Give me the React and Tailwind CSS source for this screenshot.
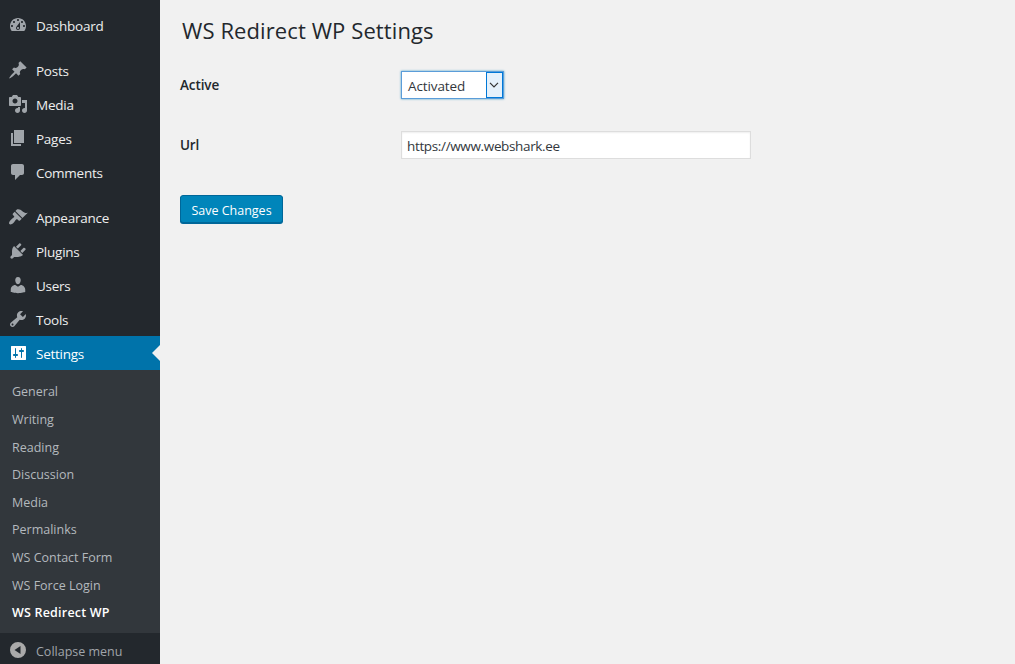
const paths = {
  dashboard:
    'M3.76 16h12.48c1.1-1.37 1.76-3.11 1.76-5 0-4.42-3.58-8-8-8s-8 3.58-8 8c0 1.89.66 3.63 1.76 5zM10 4c.55 0 1 .45 1 1s-.45 1-1 1-1-.45-1-1 .45-1 1-1zM6 6c.55 0 1 .45 1 1s-.45 1-1 1-1-.45-1-1 .45-1 1-1zm8 0c.55 0 1 .45 1 1s-.45 1-1 1-1-.45-1-1 .45-1 1-1zm-5.37 5.55L12 7v6c0 1.1-.9 2-2 2s-2-.9-2-2c0-.57.24-1.08.63-1.45zM4 10c.55 0 1 .45 1 1s-.45 1-1 1-1-.45-1-1 .45-1 1-1zm12 0c.55 0 1 .45 1 1s-.45 1-1 1-1-.45-1-1 .45-1 1-1zm-5 3c0-.55-.45-1-1-1s-1 .45-1 1 .45 1 1 1 1-.45 1-1z',
  posts:
    'M10.44 3.02l1.82-1.82 6.36 6.35-1.83 1.82c-1.05-.68-2.48-.57-3.41.36l-.75.75c-.92.93-1.04 2.35-.35 3.41l-1.83 1.82-2.41-2.41-2.8 2.79c-.42.42-3.38 2.71-3.8 2.29s1.86-3.39 2.28-3.81l2.79-2.79L4.1 9.36l1.83-1.82c1.05.69 2.48.57 3.4-.36l.75-.75c.93-.92 1.05-2.35.36-3.41z',
  media:
    'M13 11V4c0-.55-.45-1-1-1h-1.67L9 1H5L3.67 3H2c-.55 0-1 .45-1 1v7c0 .55.45 1 1 1h10c.55 0 1-.45 1-1zM7 4.5c1.38 0 2.5 1.12 2.5 2.5S8.38 9.5 7 9.5 4.5 8.38 4.5 7 5.62 4.5 7 4.5zM14 6h5v10.5c0 1.38-1.12 2.5-2.5 2.5S14 17.88 14 16.5s1.12-2.5 2.5-2.5c.17 0 .34.02.5.05V9h-3V6zm-4 8.05V13h2v3.5c0 1.38-1.12 2.5-2.5 2.5S7 17.88 7 16.5 8.12 14 9.5 14c.17 0 .34.02.5.05z',
  pages: 'M6 15V2h10v13H6zm-1 1h8v2H3V5h2v11z',
  comments:
    'M5 2h9c1.1 0 2 .9 2 2v7c0 1.1-.9 2-2 2h-2l-5 5v-5H5c-1.1 0-2-.9-2-2V4c0-1.1.9-2 2-2z',
  appearance:
    'M14.48 11.06L7.41 3.99l1.5-1.5c.5-.56 2.3-.47 3.51.32 1.21.8 1.43 1.28 2.91 2.1 1.18.64 2.45 1.26 4.45.85zm-.71.71L6.7 4.7 4.93 6.47c-.39.39-.39 1.02 0 1.41l1.06 1.06c.39.39.39 1.03 0 1.42-.6.6-1.43 1.11-2.21 1.69-.35.26-.7.53-1.01.84C1.43 14.23.4 16.08 1.4 17.07c.99 1 2.84-.03 4.18-1.36.31-.31.58-.66.85-1.02.57-.78 1.08-1.61 1.69-2.21.39-.39 1.02-.39 1.41 0l1.06 1.06c.39.39 1.02.39 1.41 0z',
  plugins:
    'M13.11 4.36L9.87 7.6 8 5.73l3.24-3.24c.35-.34 1.05-.2 1.56.32.52.51.66 1.21.31 1.55zm-8 1.77l.91-1.12 9.01 9.01-1.19.84c-.71.71-2.63 1.16-3.82 1.16H6.14L4.9 17.26c-.59.59-1.54.59-2.12 0-.59-.58-.59-1.53 0-2.12l1.24-1.24v-3.88c0-1.13.4-3.19 1.09-3.89zm7.26 3.97l3.24-3.24c.34-.35 1.04-.21 1.55.31.52.51.66 1.21.31 1.55l-3.24 3.25z',
  users:
    'M10 9.25c-2.27 0-2.73-3.44-2.73-3.44C7 4.02 7.82 2 9.97 2c2.16 0 2.98 2.02 2.71 3.81 0 0-.41 3.44-2.68 3.44zm0 2.57L12.72 10c2.39 0 4.52 2.33 4.52 4.53v2.49s-3.65 1.13-7.24 1.13c-3.65 0-7.24-1.13-7.24-1.13v-2.49c0-2.25 1.94-4.48 4.47-4.48z',
  tools:
    'M16.68 9.77c-1.34 1.34-3.3 1.67-4.95.99l-5.41 6.52c-.99.99-2.59.99-3.58 0s-.99-2.59 0-3.57l6.52-5.42c-.68-1.65-.35-3.61.99-4.95 1.28-1.28 3.12-1.62 4.72-1.06l-2.89 2.89 2.82 2.82 2.86-2.87c.53 1.58.18 3.39-1.08 4.65zM3.81 16.21c.4.39 1.04.39 1.43 0 .4-.4.4-1.04 0-1.43-.39-.4-1.03-.4-1.43 0-.39.39-.39 1.03 0 1.43z',
  settings:
    'M18 16.5V3.5c0-.28-.22-.5-.5-.5h-14c-.28 0-.5.22-.5.5v13c0 .28.22.5.5.5h14c.28 0 .5-.22.5-.5zM8 11h1c.55 0 1 .45 1 1s-.45 1-1 1H8v1.5c0 .28-.22.5-.5.5s-.5-.22-.5-.5V13H6c-.55 0-1-.45-1-1s.45-1 1-1h1V5.5c0-.28.22-.5.5-.5s.5.22.5.5V11zm5-2h-1c-.55 0-1-.45-1-1s.45-1 1-1h1V5.5c0-.28.22-.5.5-.5s.5.22.5.5V7h1c.55 0 1 .45 1 1s-.45 1-1 1h-1v5.5c0 .28-.22.5-.5.5s-.5-.22-.5-.5V9z',
  collapse:
    'M10 2a8 8 0 1 0 0 16a8 8 0 1 0 0-16zM12.5 6v8L6.5 10z',
};

const groups = [
  [{ id: 'dashboard', label: 'Dashboard' }],
  [
    { id: 'posts', label: 'Posts' },
    { id: 'media', label: 'Media' },
    { id: 'pages', label: 'Pages' },
    { id: 'comments', label: 'Comments' },
  ],
  [
    { id: 'appearance', label: 'Appearance' },
    { id: 'plugins', label: 'Plugins' },
    { id: 'users', label: 'Users' },
    { id: 'tools', label: 'Tools' },
    { id: 'settings', label: 'Settings', active: true },
  ],
];

const submenu = [
  'General',
  'Writing',
  'Reading',
  'Discussion',
  'Media',
  'Permalinks',
  'WS Contact Form',
  'WS Force Login',
  'WS Redirect WP',
];

function Icon({ id, className }) {
  return (
    <svg viewBox="0 0 20 20" className={`ml-2 size-5 shrink-0 ${className}`} fill="currentColor" fillRule="evenodd">
      <path d={paths[id]} />
    </svg>
  );
}

function MenuItem({ id, label, active }) {
  return (
    <li className={`relative flex h-[34px] items-center ${active ? 'bg-[#0073aa] text-white' : 'text-[#eee]'}`}>
      <Icon id={id} className={active ? 'text-white' : 'text-[#a0a5aa]'} />
      <span className="ml-2 pt-0.5 text-[13.5px] tracking-[-0.25px]">{label}</span>
      {active && (
        <span className="absolute right-0 top-[9px] border-y-8 border-r-8 border-y-transparent border-r-[#f1f1f1]" />
      )}
    </li>
  );
}

export default function App() {
  return (
    <div className="flex h-[664px] w-[1015px] overflow-hidden bg-[#f1f1f1] font-['Open_Sans',sans-serif] text-[#23282d]">
      <nav className="w-40 shrink-0 bg-[#23282d] pt-2">
        <div className="flex flex-col gap-[11px]">
          {groups.map((items) => (
            <ul key={items[0].id}>
              {items.map((item) => (
                <MenuItem key={item.id} {...item} />
              ))}
            </ul>
          ))}
        </div>
        <ul className="h-[263px] bg-[#32373c] pl-3 pt-[9px] text-[12.5px]">
          {submenu.map((label) => (
            <li
              key={label}
              className={`flex h-[27.6px] items-center ${label === 'WS Redirect WP' ? 'font-semibold tracking-[0.2px] text-white' : 'text-[#b4b9be]'}`}
            >
              {label}
            </li>
          ))}
        </ul>
        <div className="flex h-[34px] items-center text-[#a0a5aa]">
          <Icon id="collapse" className="text-[#aaa]" />
          <span className="ml-2 pt-[5px] text-[12.5px]">Collapse menu</span>
        </div>
      </nav>

      <main className="flex flex-col items-start pl-5">
        <h1 className="ml-0.5 mt-3.5 h-[33px] text-[22px] leading-8 tracking-[0.1px]">WS Redirect WP Settings</h1>
        <div className="mt-6 flex h-7">
          <div className="w-[221px] text-[13.5px] font-semibold leading-7 tracking-[-0.1px]">Active</div>
          <div className="flex h-7 w-[103px] border border-[#5b9dd9] bg-white shadow-[0_0_2px_rgba(30,140,190,0.8)]">
            <span className="flex-1 pl-1.5 text-[13.5px] leading-7 tracking-[-0.1px] text-[#32373c]">Activated</span>
            <span className="flex h-[26px] w-[17px] items-center justify-center border border-[#0078d7] bg-[#e5f1fb] pr-px">
              <svg viewBox="0 0 10 6" className="h-1.5 w-2.5 shrink-0" fill="none" stroke="#333" strokeWidth="1.2">
                <path d="M1 .8l4 4 4-4" />
              </svg>
            </span>
          </div>
        </div>
        <div className="mt-8 flex h-7">
          <div className="w-[221px] text-[13.5px] font-semibold leading-7 tracking-[-0.2px]">Url</div>
          <div className="h-7 w-[350px] border border-[#ddd] bg-white pl-[5px] text-[13.5px] leading-7 tracking-[-0.35px] text-[#32373c] shadow-[inset_0_1px_2px_rgba(0,0,0,0.07)]">
            https://www.webshark.ee
          </div>
        </div>
        <button className="mt-9 h-7 w-[103px] rounded-[3px] border border-[#006799] bg-[#0085ba] pt-[5px] text-[12.5px] leading-none text-white shadow-[0_1px_0_#006799]">
          Save Changes
        </button>
      </main>
    </div>
  );
}
